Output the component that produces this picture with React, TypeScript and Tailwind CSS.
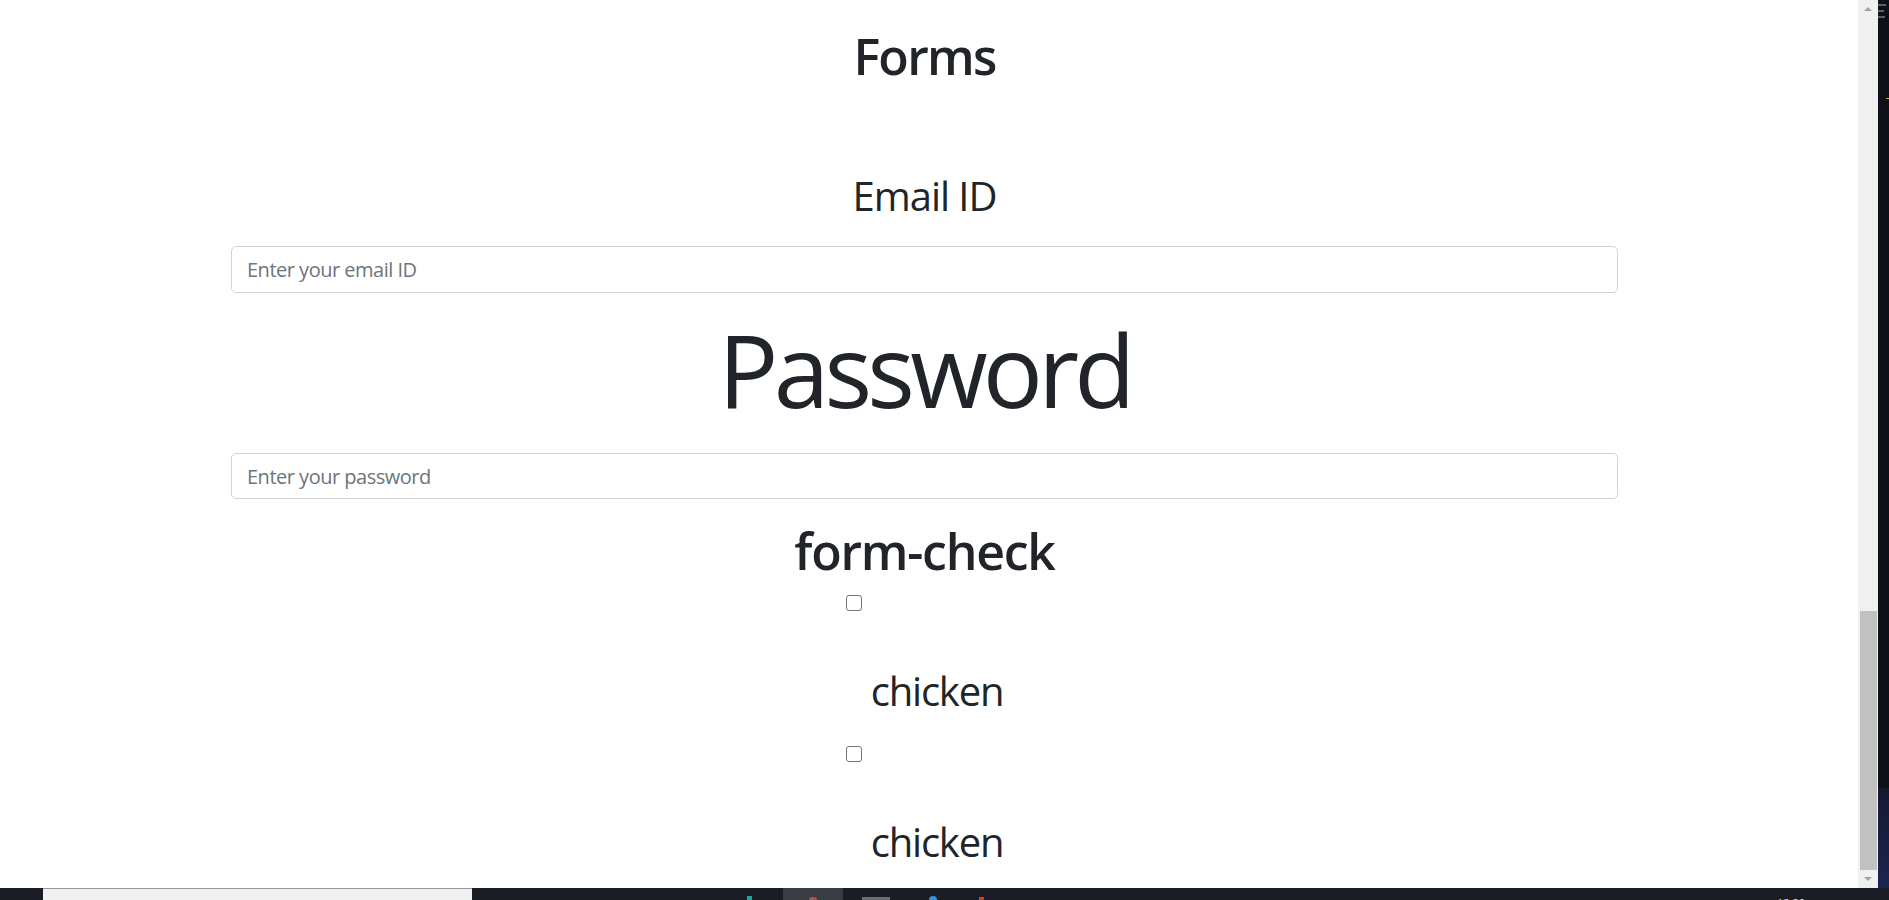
export default function App() {
  return (
    <div className="flex h-[900px] w-[1889px] flex-col overflow-hidden bg-white font-['Open_Sans',sans-serif] text-[#212529]">
      <div className="flex min-h-0 flex-1">
        {/* page content */}
        <main className="min-w-0 flex-1 overflow-hidden">
          <div className="ml-[231px] w-[1387px] text-center">
            <h1 className="mt-[26px] h-[60px] text-[50px] font-semibold leading-[60px] tracking-[-0.035em]">Forms</h1>

            <h2 className="mt-[86px] h-[48px] text-[40px] font-normal leading-[48px] tracking-[-0.026em]">Email ID</h2>
            <input
              type="email"
              placeholder="Enter your email ID"
              className="mt-[26px] block h-[47px] w-full rounded-[5px] border border-[#ced4da] px-[15px] text-[20px] tracking-[-0.025em] text-[#212529] outline-none placeholder:text-[#6c757d]"
            />

            <h2 className="mt-[16px] h-[120px] text-[100px] font-normal leading-[120px] tracking-[-0.048em]">Password</h2>
            <input
              type="password"
              placeholder="Enter your password"
              className="mt-[24px] block h-[46px] w-full rounded-[5px] border border-[#ced4da] px-[15px] text-[20px] tracking-[-0.025em] text-[#212529] outline-none placeholder:text-[#6c757d]"
            />

            <h1 className="mt-[22px] h-[60px] text-[50px] font-semibold leading-[60px] tracking-[-0.025em]">form-check</h1>

            <CheckItem label="chicken" top="mt-[14px]" />
            <CheckItem label="chicken" top="mt-[31px]" />
          </div>
        </main>

        {/* scrollbar */}
        <div className="flex w-[20px] flex-col bg-[#f0f0f0]">
          <div className="flex h-[17px] items-center justify-center">
            <div className="h-0 w-0 border-x-[4px] border-b-[4px] border-x-transparent border-b-[#a3a3a3]" />
          </div>
          <div className="h-[594px]" />
          <div className="ml-[2px] mr-[1px] h-[259px] bg-[#c1c1c1]" />
          <div className="flex flex-1 items-center justify-center">
            <div className="h-0 w-0 border-x-[4px] border-t-[4px] border-x-transparent border-t-[#a3a3a3]" />
          </div>
        </div>

        {/* window behind */}
        <div className="flex w-[11px] flex-col bg-[#0f1118]">
          <div className="mt-[4px] h-[2px] w-[8px] bg-[#5b606a]" />
          <div className="mt-[4px] h-[2px] w-[6px] bg-[#5b606a]" />
          <div className="mt-[4px] h-[2px] w-[7px] bg-[#5b606a]" />
          <div className="mt-[80px] h-[1px] w-[3px] self-end bg-[#c8b45a]" />
          <div className="flex-1" />
          <div className="h-[100px] bg-gradient-to-b from-[#151830] to-[#1e2452]" />
        </div>
      </div>

      {/* taskbar */}
      <div className="flex h-[12px] items-end bg-[#1b1d24]">
        <div className="w-[43px]" />
        <div className="h-[12px] w-[429px] border-t border-[#9a9a9a] bg-[#f0f0f0]" />
        <div className="w-[275px]" />
        <div className="h-[4px] w-[5px] bg-[#1fa39a]" />
        <div className="w-[31px]" />
        <div className="flex h-[12px] w-[60px] items-end justify-center bg-[#3a3c44]">
          <div className="h-[3px] w-[8px] rounded-t-full bg-[#a5574e]" />
        </div>
        <div className="w-[19px]" />
        <div className="h-[3px] w-[28px] bg-[#6a6d75]" />
        <div className="w-[39px]" />
        <div className="h-[4px] w-[8px] rounded-t-full bg-[#3b8fd8]" />
        <div className="w-[42px]" />
        <div className="h-[3px] w-[5px] bg-[#c7452f]" />
        <div className="flex-1" />
        <div className="mr-[84px] h-[3px] overflow-hidden text-[11px] leading-[11px] text-[#e0e0e0]">12:20</div>
      </div>
    </div>
  );
}

function CheckItem({ label, top }: { label: string; top: string }) {
  return (
    <div className={top}>
      <div className="flex h-[16px] pl-[615px]">
        <input
          type="checkbox"
          className="h-[16px] w-[16px] appearance-none rounded-[3px] border border-[#767676] bg-white"
        />
      </div>
      <h2 className="mt-[56px] h-[48px] pl-[25px] text-[40px] font-normal leading-[48px] tracking-[-0.03em]">{label}</h2>
    </div>
  );
}
